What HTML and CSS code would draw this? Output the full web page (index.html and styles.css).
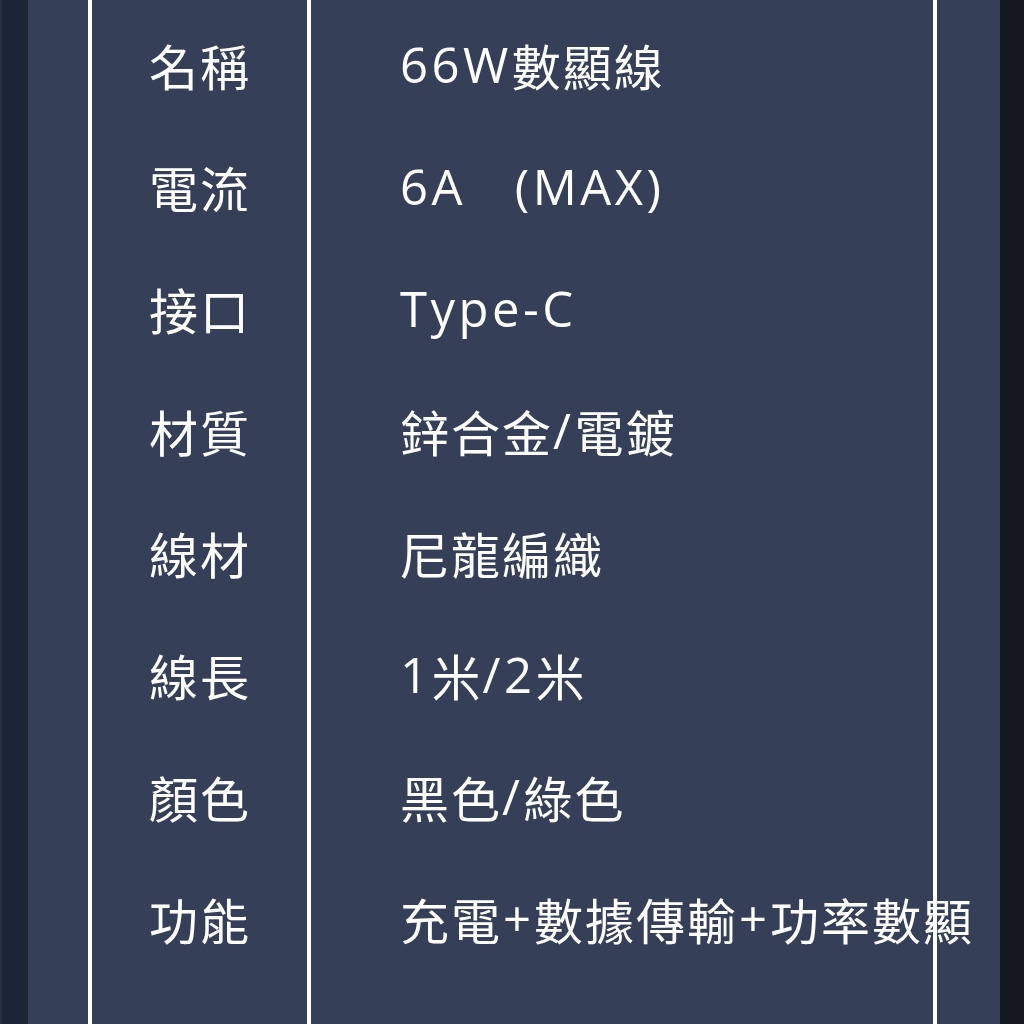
FILE: index.html
```html
<!DOCTYPE html>
<html lang="zh-Hant">
<head>
<meta charset="utf-8">
<link rel="stylesheet" href="styles.css">
</head>
<body>
<div class="page">
  <div class="edge-left"></div>
  <div class="main">
    <div class="spacer"></div>
    <div class="table">
      <div class="col col-label">
        <div class="cell">名稱</div>
        <div class="cell">電流</div>
        <div class="cell">接口</div>
        <div class="cell">材質</div>
        <div class="cell">線材</div>
        <div class="cell">線長</div>
        <div class="cell">顏色</div>
        <div class="cell">功能</div>
      </div>
      <div class="col col-value">
        <div class="cell"><span class="lat">66W</span>數顯線</div>
        <div class="cell"><span class="lat">6A&nbsp;&nbsp;&nbsp;(MAX)</span></div>
        <div class="cell"><span class="lat">Type-C</span></div>
        <div class="cell">鋅合金<span class="lat">/</span>電鍍</div>
        <div class="cell">尼龍編織</div>
        <div class="cell"><span class="lat">1</span>米<span class="lat">/2</span>米</div>
        <div class="cell">黑色<span class="lat">/</span>綠色</div>
        <div class="cell">充電<span class="plus">+</span>數據傳輸<span class="plus">+</span>功率數顯</div>
      </div>
    </div>
  </div>
  <div class="edge-right"></div>
</div>
</body>
</html>
```

FILE: styles.css
```css
html, body {
  margin: 0;
  padding: 0;
  background: #354058;
}
.page {
  display: flex;
  width: 1024px;
  height: 1024px;
  overflow: hidden;
}
.edge-left {
  width: 28px;
  flex: none;
  background: #1c2535;
  border-left: 2px solid #243046;
  box-sizing: border-box;
}
.edge-right {
  width: 24px;
  flex: none;
  background: #13171e;
}
.main {
  flex: 1;
  display: flex;
  background: #354058;
}
.spacer {
  width: 60px;
  flex: none;
}
.table {
  display: flex;
  height: 1024px;
  border-left: 4px solid #ffffff;
  border-right: 4px solid #ffffff;
  box-sizing: border-box;
  font-family: "Open Sans", "Noto Sans CJK TC", sans-serif;
  font-size: 49px;
  letter-spacing: 2px;
  color: #ffffff;
}
.col {
  display: flex;
  flex-direction: column;
  padding-top: 3px;
  box-sizing: border-box;
}
.col-label {
  width: 219px;
  border-right: 4px solid #ffffff;
  padding-left: 57px;
}
.col-value {
  width: 622px;
  padding-left: 89px;
}
.cell {
  height: 122px;
  display: flex;
  align-items: center;
  white-space: nowrap;
  flex: none;
}
.lat {
  letter-spacing: 3.5px;
}
.plus {
  letter-spacing: 2px;
  padding: 0 1px;
}
```
